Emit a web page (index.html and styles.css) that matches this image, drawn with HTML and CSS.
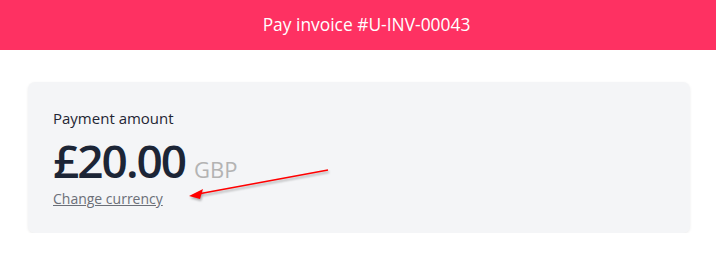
FILE: index.html
```html
<!DOCTYPE html>
<html>
<head>
<meta charset="utf-8">
<link rel="stylesheet" href="styles.css">
</head>
<body>
<header class="topbar">Pay invoice #U-INV-00043</header>
<main class="content">
  <section class="card">
    <div class="label">Payment amount</div>
    <div class="amount-row">
      <span class="amount">£20.00</span>
      <span class="currency">GBP</span>
    </div>
    <a class="change" href="#">Change currency</a>
  </section>
</main>
<svg class="arrow" width="716" height="253" viewBox="0 0 716 253">
  <line x1="328" y1="170" x2="198" y2="194" stroke="#ff0000" stroke-width="1.6"/>
  <polygon points="189,196 203,189 200,199" fill="#ff0000"/>
</svg>
</body>
</html>
```
FILE: styles.css
```css
html, body {
  margin: 0;
  padding: 0;
  background: #ffffff;
  font-family: "Open Sans", "Noto Sans", sans-serif;
}
.topbar {
  height: 50px;
  background: #fe3162;
  color: #ffffff;
  font-size: 17.4px;
  display: flex;
  align-items: center;
  justify-content: center;
  padding: 0 0 2px 17px;
  box-sizing: border-box;
}
.content {
  padding: 32px 26px 0 28px;
}
.card {
  background: #f4f5f7;
  border-radius: 7px;
  box-shadow: 0 1px 3px rgba(0,0,0,0.08);
  height: 151px;
  box-sizing: border-box;
  padding: 26px 25px;
  display: flex;
  flex-direction: column;
  align-items: flex-start;
}
.label {
  font-size: 15px;
  color: #1f2533;
  line-height: 20px;
}
.amount-row {
  display: flex;
  align-items: baseline;
  gap: 9px;
  margin-top: 6px;
  line-height: 52px;
}
.amount {
  font-size: 46px;
  font-weight: 600;
  color: #1c2536;
  letter-spacing: -2px;
}
.currency {
  font-size: 22px;
  color: #b3b3b3;
}
.change {
  font-size: 14px;
  color: #6b6f78;
  text-decoration: underline;
  line-height: 18px;
  margin-top: -5px;
}
.arrow {
  position: absolute;
  left: 0;
  top: 0;
  pointer-events: none;
  filter: drop-shadow(1px 2px 1px rgba(0,0,0,0.3));
}
```
